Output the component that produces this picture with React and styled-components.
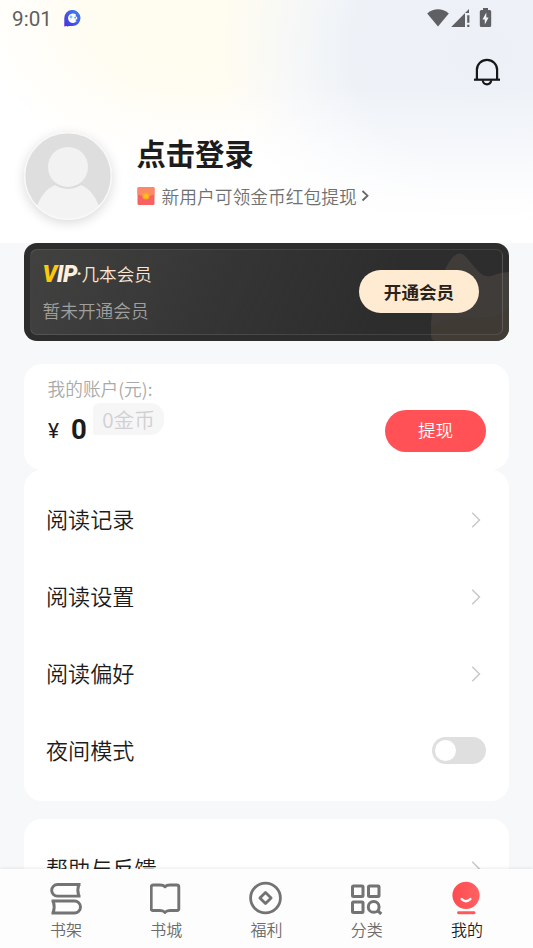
import React from 'react';
import styled, { createGlobalStyle } from 'styled-components';

const Global = createGlobalStyle`
  * { box-sizing: border-box; }
  body { margin: 0; background: #f6f8fa; font-family: "Noto Sans CJK SC", sans-serif; font-weight: 350; }
  button { border: 0; padding: 0; font: inherit; cursor: pointer; }
  svg { display: block; flex: none; }
`;

const Screen = styled.div`
  width: 533px;
  height: 948px;
  overflow: hidden;
  display: flex;
  flex-direction: column;
  background: #f6f8fa;
  color: #1c1c1c;
`;

const Scroll = styled.main`
  height: 869px;
  flex: none;
  overflow: hidden;
`;

const Header = styled.header`
  height: 243px;
  display: flex;
  flex-direction: column;
  background:
    linear-gradient(to bottom, rgba(255, 255, 255, 0) 35%, #fff 92%),
    radial-gradient(ellipse 260px 230px at 480px 50px, #edf1f7 0, #eef2f7 50%, rgba(243, 246, 250, 0.6) 77%, rgba(255, 255, 255, 0) 100%),
    radial-gradient(ellipse 225px 165px at 195px 10px, #fffcf0 0, #fffcf1 45%, rgba(255, 255, 255, 0) 100%),
    #fff;
`;

const StatusBar = styled.div`
  height: 37px;
  padding: 0 40px 0 12px;
  display: flex;
  align-items: center;
  color: #5f5f5f;
`;

const Clock = styled.time`
  font: 400 20.7px/24px Roboto, sans-serif;
  margin-right: 12px;
`;

const StatusIcons = styled.div`
  margin-left: auto;
  display: flex;
  align-items: center;
  height: 22px;
`;

const Actions = styled.div`
  height: 70px;
  padding: 0 32px;
  display: flex;
  justify-content: flex-end;
  align-items: center;
`;

const Profile = styled.section`
  display: flex;
  padding: 25px 24px 0;
`;

const Avatar = styled.div`
  width: 88px;
  height: 88px;
  border-radius: 50%;
  box-shadow: 0 3px 12px rgba(0, 0, 0, 0.15);
`;

const ProfileText = styled.div`
  margin-left: 24.5px;
  padding-top: 3px;
`;

const Title = styled.h1`
  margin: 0;
  font-size: 29.3px;
  line-height: 34px;
  font-weight: 700;
`;

const Promo = styled.div`
  margin-top: 16px;
  height: 22px;
  display: flex;
  align-items: center;
  font-size: 17.75px;
  line-height: 22px;
  color: #707070;
`;

const PromoText = styled.span`
  margin: 0 4px 0 7px;
`;

const VipCard = styled.section`
  position: relative;
  margin: 0 24px;
  height: 98px;
  padding: 6px;
  border-radius: 13px;
  overflow: hidden;
  background: #2d2d2d;
`;

const VipArt = styled.svg`
  position: absolute;
  right: 0;
  top: 0;
`;

const VipInner = styled.div`
  position: relative;
  height: 86px;
  padding: 0 23px 0 11.5px;
  display: flex;
  align-items: center;
  justify-content: space-between;
  border: 1px solid rgba(255, 255, 255, 0.1);
  border-radius: 7px;
  background: linear-gradient(115deg, rgba(92, 91, 89, 0.45), rgba(62, 62, 62, 0.4) 45%, rgba(48, 48, 48, 0.1) 75%);
`;

const VipCopy = styled.div`
  display: flex;
  flex-direction: column;
  gap: 14px;
`;

const VipTitle = styled.div`
  height: 22px;
  display: flex;
  align-items: center;
  font-size: 17.6px;
  line-height: 22px;
  color: #fbe6d3;
`;

const VipDot = styled.span`
  width: 5px;
  font-family: Roboto, sans-serif;
  font-weight: 700;
  text-align: center;
`;

const VipMark = styled.span`
  display: flex;
  font: italic 900 23px/24px Roboto, sans-serif;
  letter-spacing: -0.5px;
  color: #fff0dd;
  width: 34px;
  padding-top: 2px;
`;

const VipV = styled.span`
  color: #fcc80e;
`;

const VipStatus = styled.div`
  font-size: 17.7px;
  line-height: 22px;
  color: #9f9f9e;
`;

const VipButton = styled.button`
  width: 120px;
  height: 43px;
  margin-top: -1px;
  border-radius: 22px;
  background: #ffebd2;
  color: #2b221a;
  font-size: 17.6px;
  line-height: 43px;
  font-weight: 700;
`;

const Card = styled.section`
  margin: ${({ $gap }) => $gap}px 24px 0;
  height: ${({ $height }) => $height}px;
  padding: ${({ $pad }) => $pad || '11.5px 22px'};
  border-radius: 18px;
  background: #fff;
`;

const AccountLabel = styled.div`
  padding-left: 0.5px;
  font-size: 17.7px;
  line-height: 22px;
  color: #a9a9a9;
`;

const AccountRow = styled.div`
  display: flex;
  height: 56px;
`;

const Yen = styled.span`
  margin-top: 19px;
  padding-left: 1px;
  width: 24px;
  font: 400 21px/26px Roboto, sans-serif;
`;

const Amount = styled.strong`
  margin-top: 15px;
  width: 22px;
  font: 700 27.5px/32px Roboto, sans-serif;
`;

const Coins = styled.span`
  margin-top: 4px;
  width: 71px;
  height: 32px;
  border-radius: 6px 14px 14px 2px;
  background: #f6f6f6;
  color: #d0d0d4;
  text-align: center;
  font-size: 20.7px;
  line-height: 32px;
`;

const Withdraw = styled.button`
  margin: 11px 0 0 auto;
  padding-bottom: 2px;
  width: 101px;
  height: 42px;
  border-radius: 21px;
  background: #ff5156;
  color: #fff;
  font-size: 17.6px;
  line-height: 40px;
`;

const MenuRow = styled.div`
  height: 77px;
  display: flex;
  align-items: center;
  justify-content: space-between;
  font-size: 22.1px;
  line-height: 30px;
  color: #1c1c1c;
`;

const RowLabel = styled.span`
  padding-bottom: 4px;
`;

const Arrow = styled.svg`
  margin-right: 6px;
`;

const Toggle = styled.button`
  width: 54px;
  height: 27px;
  margin-right: 1px;
  margin-bottom: 2px;
  padding: 3px;
  border-radius: 14px;
  background: #dfdfdf;
`;

const Knob = styled.span`
  display: block;
  width: 21px;
  height: 21px;
  border-radius: 50%;
  background: #fff;
`;

const Nav = styled.nav`
  position: relative;
  height: 79px;
  flex: none;
  padding: 0 16px;
  display: grid;
  grid-template-columns: repeat(5, 1fr);
  background: #fdfdfd;
  box-shadow: 0 -1px 3px rgba(0, 0, 0, 0.08);
`;

const Tab = styled.div`
  display: flex;
  flex-direction: column;
  align-items: center;
  padding-top: 12px;
  gap: 3px;
  font-size: 16px;
  line-height: 22px;
  color: ${({ $active }) => ($active ? '#1f1f1f' : '#6c6c6c')};
`;

const AppBadge = () => (
  <svg width="17" height="17" viewBox="0 0 17 17">
    <defs>
      <linearGradient id="badge" x1="1" y1="0" x2="0" y2="1">
        <stop offset="0" stopColor="#3c8bf0" />
        <stop offset="1" stopColor="#4c2be0" />
      </linearGradient>
    </defs>
    <path d="M.3 16.500V8.400a8.100 8.100 0 1 1 8.100 7.700H4.700l-1 .6-.8-.6Z" fill="url(#badge)" />
    <path d="M12.200 4.800A4.800 4.800 0 1 0 12.700 11l-1.700-1 2.200-.7V7l-2-.8Z" fill="#fff" />
    <path d="M7 5.500v3M5.500 7h3" stroke="#51c6e8" strokeWidth="1.200" />
    <circle cx="11.100" cy="7.700" r=".8" fill="#3671ee" />
  </svg>
);

const SystemIcons = () => (
  <svg width="66" height="22" viewBox="0 0 66 22" fill="#5e6063">
    <path d="M.2 5.400C6.800-.1 15.200-.1 21.800 5.400L11 18.500Z" />
    <path d="M24.200 19 42 1v4h-4v14Z" />
    <path d="M40.200 7.200h2.200v7.500h-2.200zM40.200 16.800h2.200V19h-2.200z" />
    <path d="M56 0h5v2h1.600A1.600 1.600 0 0 1 64.200 3.600v13.800A1.600 1.600 0 0 1 62.600 19h-8.200a1.600 1.600 0 0 1-1.600-1.600V3.600A1.600 1.600 0 0 1 54.400 2H56Z" />
    <path d="m59.300 4.600-3.800 6.800h2.300v5l3.800-7h-2.300Z" fill="#f2f4f8" />
  </svg>
);

const Bell = () => (
  <svg width="28" height="28" viewBox="0 0 28 28" fill="none" stroke="#17181b" strokeWidth="2.200">
    <path d="M3.900 21.500V11.700a10.100 9.900 0 0 1 20.200 0v9.800" />
    <path d="M1 21.700h26" />
    <path d="M9.800 22.300a4.200 4 0 0 0 8.400 0" />
  </svg>
);

const AvatarDrawing = () => (
  <svg width="88" height="88" viewBox="0 0 88 88">
    <defs><clipPath id="face"><circle cx="44" cy="44" r="43.500" /></clipPath></defs>
    <g clipPath="url(#face)">
      <path d="M0 0h88v88H0Z" fill="#dedede" />
      <path d="M12 76C17 64 22 57 31 53q13 5.500 26 0c9 4 14 11 19 23v14H12Z" fill="#f3f3f3" />
      <circle cx="44" cy="35" r="20" fill="#f2f2f2" />
      <path d="M29.500 51q14.500 10 29 0" fill="none" stroke="#dcdcdc" strokeWidth="1.800" />
    </g>
    <circle cx="44" cy="44" r="43.300" fill="none" stroke="#f8f8f8" strokeWidth="1.400" />
  </svg>
);

const RedPacket = () => (
  <svg width="18" height="18" viewBox="0 0 18 18">
    <rect x=".5" width="17" height="18" rx="1.500" fill="#f56261" />
    <path d="M2 0h14a1.500 1.500 0 0 1 1.500 1.500v6q-8.500 3-17 0v-6A1.500 1.500 0 0 1 2 0Z" fill="#fb8867" />
    <circle cx="9" cy="9" r="3.600" fill="#f9a824" />
    <circle cx="9" cy="9" r="2" fill="#ffc01c" />
  </svg>
);

const RowArrow = () => (
  <Arrow width="10" height="16" viewBox="0 0 10 16" fill="none" stroke="#c8c8c8" strokeWidth="1.500">
    <path d="m1.200 .8 7.300 7.200-7.300 7.200" />
  </Arrow>
);

const CrownArt = () => (
  <VipArt width="90" height="98" viewBox="0 0 90 98">
    <path d="M12 92V80q1-24 12-48 6-17 14-21 5-2 9 3l12 14q8 8 16 4 8-3 15-3v69H18q-6 0-6-6Z" fill="#4a4641" fillOpacity=".7" />
    <path d="M12 84q17-12 42-9 21 1 36-10v33H18q-6 0-6-6Z" fill="#46392b" fillOpacity=".3" />
  </VipArt>
);

const icons = {
  shelf: (
    <svg width="32" height="34" viewBox="0 0 32 34" fill="none" stroke="#737373" strokeWidth="2.900" strokeLinejoin="round">
      <path d="M30.500 3.500H7.500a5.800 5.800 0 0 0 0 11.600h23M28.800 3.500q-2 5.800 0 11.600" />
      <path d="M1.500 20h23a6 6 0 0 1 0 12h-23M3.200 20q2 6 0 12" />
    </svg>
  ),
  city: (
    <svg width="32" height="34" viewBox="0 0 32 34" fill="none" stroke="#737373" strokeWidth="2.900" strokeLinejoin="round">
      <path d="M3.200 4H10q3.500 0 5 1.800Q16.500 4 20 4h6.800a2 2 0 0 1 2 2v22a1.500 1.500 0 0 1-1.500 1.500H20q-3.500 0-5 2-1.500-2-5-2H2.700A1.500 1.500 0 0 1 1.200 28V6a2 2 0 0 1 2-2Z" />
    </svg>
  ),
  welfare: (
    <svg width="34" height="34" viewBox="0 0 34 34" fill="none" stroke="#737373" strokeWidth="2.800">
      <circle cx="16.500" cy="17" r="14.900" />
      <path d="m16.500 11.400 5.600 5.600-5.600 5.600-5.600-5.600Z" strokeLinejoin="round" />
    </svg>
  ),
  category: (
    <svg width="32" height="34" viewBox="0 0 32 34" fill="none" stroke="#737373" strokeWidth="3">
      <rect x="1.500" y="5" width="10.500" height="10.500" rx="1" />
      <rect x="17.500" y="5" width="10.500" height="10.500" rx="1" />
      <rect x="1.500" y="21" width="10.500" height="10.500" rx="1" />
      <circle cx="22.700" cy="25.900" r="5.400" />
      <path d="m26.300 29.500 4 3.500" />
    </svg>
  ),
  mine: (
    <svg width="30" height="34" viewBox="0 0 30 34" fill="none">
      <defs>
        <linearGradient id="mine" x1="0" x2="1">
          <stop offset="0" stopColor="#ff4b50" />
          <stop offset="1" stopColor="#ff6262" />
        </linearGradient>
      </defs>
      <circle cx="14" cy="14.300" r="13.600" fill="url(#mine)" />
      <path d="M9.700 18.200q4.300 4 8.600 0" stroke="#fff" strokeWidth="2.500" strokeLinecap="round" />
      <path d="M6.500 31.800H22" stroke="#ff585b" strokeWidth="2.900" strokeLinecap="round" />
    </svg>
  ),
};

const tabs = [
  ['shelf', '书架'],
  ['city', '书城'],
  ['welfare', '福利'],
  ['category', '分类'],
  ['mine', '我的'],
];

export default function App() {
  return (
    <Screen>
      <Global />
      <Scroll>
        <Header>
          <StatusBar>
            <Clock>9:01</Clock>
            <AppBadge />
            <StatusIcons><SystemIcons /></StatusIcons>
          </StatusBar>
          <Actions><Bell /></Actions>
          <Profile>
            <Avatar><AvatarDrawing /></Avatar>
            <ProfileText>
              <Title>点击登录</Title>
              <Promo>
                <RedPacket />
                <PromoText>新用户可领金币红包提现</PromoText>
                <svg width="8" height="12" viewBox="0 0 8 12" fill="none" stroke="#656565" strokeWidth="1.800">
                  <path d="m1.500 1 5 4.700-5 4.800" />
                </svg>
              </Promo>
            </ProfileText>
          </Profile>
        </Header>
        <VipCard>
          <CrownArt />
          <VipInner>
            <VipCopy>
              <VipTitle>
                <VipMark><VipV>V</VipV>IP</VipMark>
                <VipDot>·</VipDot>
                <span>几本会员</span>
              </VipTitle>
              <VipStatus>暂未开通会员</VipStatus>
            </VipCopy>
            <VipButton>开通会员</VipButton>
          </VipInner>
        </VipCard>
        <Card $gap={23} $height={106} $pad="13px 23px 0">
          <AccountLabel>我的账户(元):</AccountLabel>
          <AccountRow>
            <Yen>¥</Yen>
            <Amount>0</Amount>
            <Coins>0金币</Coins>
            <Withdraw>提现</Withdraw>
          </AccountRow>
        </Card>
        <Card $gap={0} $height={331}>
          {['阅读记录', '阅读设置', '阅读偏好'].map((label) => (
            <MenuRow key={label}><RowLabel>{label}</RowLabel><RowArrow /></MenuRow>
          ))}
          <MenuRow><RowLabel>夜间模式</RowLabel><Toggle aria-label="夜间模式"><Knob /></Toggle></MenuRow>
        </Card>
        <Card $gap={18} $height={120}>
          <MenuRow><RowLabel>帮助与反馈</RowLabel><RowArrow /></MenuRow>
        </Card>
      </Scroll>
      <Nav>
        {tabs.map(([key, label]) => (
          <Tab key={key} $active={key === 'mine'}>{icons[key]}<span>{label}</span></Tab>
        ))}
      </Nav>
    </Screen>
  );
}
